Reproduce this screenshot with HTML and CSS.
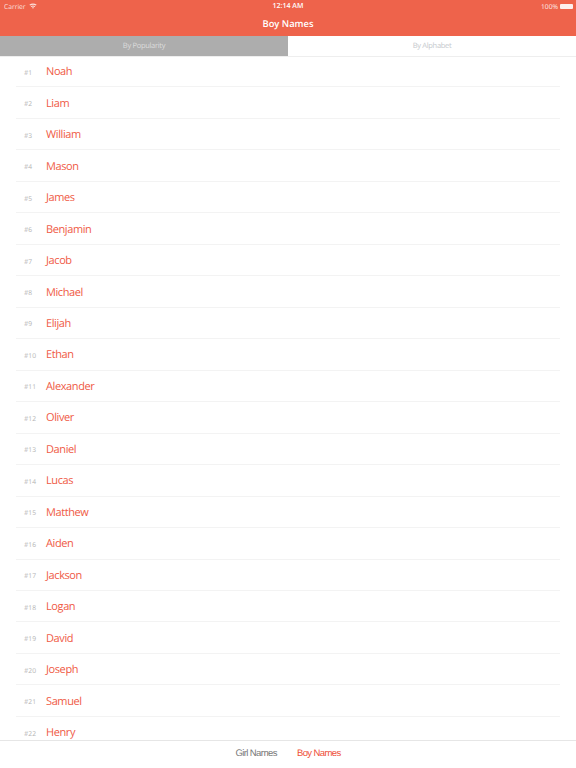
FILE: index.html
```html
<!DOCTYPE html><html lang="en">
<head>
  <meta charset="UTF-8">
  <meta name="viewport" content="width=device-width, initial-scale=1.0">
  <title>Boy Names</title>
  <link rel="stylesheet" href="styles.css">
</head>
<body>
<div class="header">
  <div class="status-bar">
    <div class="carrier">Carrier
      <svg class="wifi" viewBox="0 0 10 7" width="8" height="6"><path d="M5 7 L3.6 5.4 Q5 4.5 6.4 5.4 Z M3 4.7 L2.1 3.7 Q5 1.8 7.9 3.7 L7 4.7 Q5 3.4 3 4.7 Z M1.5 3 L0.4 1.9 Q5 -1.4 9.6 1.9 L8.5 3 Q5 0.6 1.5 3 Z" fill="#fff"/></svg>
    </div>
    <div class="clock">12:14 AM</div>
    <div class="battery-wrap">100%
      <span class="battery"></span>
    </div>
  </div>
  <div class="title">Boy Names</div>
</div>
<div class="tabs">
  <div class="tab active">By Popularity</div>
  <div class="tab">By Alphabet</div>
</div>
<div class="list">
  <div class="row"><span class="rank">#1</span><span class="name">Noah</span></div>
  <div class="row"><span class="rank">#2</span><span class="name">Liam</span></div>
  <div class="row"><span class="rank">#3</span><span class="name">William</span></div>
  <div class="row"><span class="rank">#4</span><span class="name">Mason</span></div>
  <div class="row"><span class="rank">#5</span><span class="name">James</span></div>
  <div class="row"><span class="rank">#6</span><span class="name">Benjamin</span></div>
  <div class="row"><span class="rank">#7</span><span class="name">Jacob</span></div>
  <div class="row"><span class="rank">#8</span><span class="name">Michael</span></div>
  <div class="row"><span class="rank">#9</span><span class="name">Elijah</span></div>
  <div class="row"><span class="rank">#10</span><span class="name">Ethan</span></div>
  <div class="row"><span class="rank">#11</span><span class="name">Alexander</span></div>
  <div class="row"><span class="rank">#12</span><span class="name">Oliver</span></div>
  <div class="row"><span class="rank">#13</span><span class="name">Daniel</span></div>
  <div class="row"><span class="rank">#14</span><span class="name">Lucas</span></div>
  <div class="row"><span class="rank">#15</span><span class="name">Matthew</span></div>
  <div class="row"><span class="rank">#16</span><span class="name">Aiden</span></div>
  <div class="row"><span class="rank">#17</span><span class="name">Jackson</span></div>
  <div class="row"><span class="rank">#18</span><span class="name">Logan</span></div>
  <div class="row"><span class="rank">#19</span><span class="name">David</span></div>
  <div class="row"><span class="rank">#20</span><span class="name">Joseph</span></div>
  <div class="row"><span class="rank">#21</span><span class="name">Samuel</span></div>
  <div class="row"><span class="rank">#22</span><span class="name">Henry</span></div>
</div>
<div class="tabbar">
  <div class="tabbar-item">Girl Names</div>
  <div class="tabbar-item current">Boy Names</div>
</div>
</body>
</html>
```

FILE: styles.css
```css
* { box-sizing: border-box; }
body {
  margin: 0;
  height: 768px;
  overflow: hidden;
  display: flex;
  flex-direction: column;
  font-family: 'Open Sans', sans-serif;
  text-rendering: geometricPrecision;
  background: white;
}
.header {
  height: 36px;
  flex: none;
  background: #ee634b;
  color: white;
}
.status-bar {
  display: flex;
  justify-content: space-between;
  align-items: center;
  height: 12px;
  padding: 0 3px 0 4px;
  font-size: 6.7px;
  position: relative;
}
.carrier {
  display: flex;
  align-items: center;
  gap: 3px;
  opacity: 0.8;
}
.clock {
  position: absolute;
  left: 0;
  right: 0;
  text-align: center;
  font-weight: 600;
  font-size: 7px;
}
.battery-wrap {
  display: flex;
  align-items: center;
  gap: 2px;
  opacity: 0.9;
}
.battery {
  display: block;
  width: 13px;
  height: 5px;
  background: white;
  border-radius: 1px;
  box-shadow: 1px 0 0 -1.5px white;
}
.title {
  text-align: center;
  font-size: 9.4px;
  font-weight: 600;
  line-height: 24px;
}
.tabs {
  display: flex;
  flex: none;
  height: 21px;
  border-bottom: 1px solid #eeeeee;
}
.tab {
  flex: 1;
  text-align: center;
  font-size: 7.5px;
  letter-spacing: -0.3px;
  line-height: 20px;
  color: #c4c8cc;
}
.tab.active {
  background: #adadad;
  color: #dcdcdc;
}
.list {
  flex: 1;
  overflow: hidden;
  padding: 0 16px;
}
.row {
  display: flex;
  align-items: center;
  height: 31.47px;
  padding-top: 1px;
  border-bottom: 1px solid #f3f3f3;
}
.row:first-child {
  height: 30.47px;
  padding-top: 0;
}
.rank {
  width: 30px;
  padding-left: 8px;
  padding-top: 1px;
  font-size: 6.7px;
  color: #b4b4b4;
}
.name {
  font-size: 11px;
  letter-spacing: -0.4px;
  color: #ef5a45;
}
.tabbar {
  height: 28px;
  flex: none;
  display: flex;
  justify-content: center;
  align-items: center;
  gap: 20px;
  padding-bottom: 3px;
  background: white;
  border-top: 1px solid #e6e6e6;
  font-family: 'Liberation Sans', sans-serif;
  font-size: 9.5px;
  letter-spacing: -0.6px;
  color: #777777;
}
.tabbar-item.current {
  color: #ee4f38;
}
```
